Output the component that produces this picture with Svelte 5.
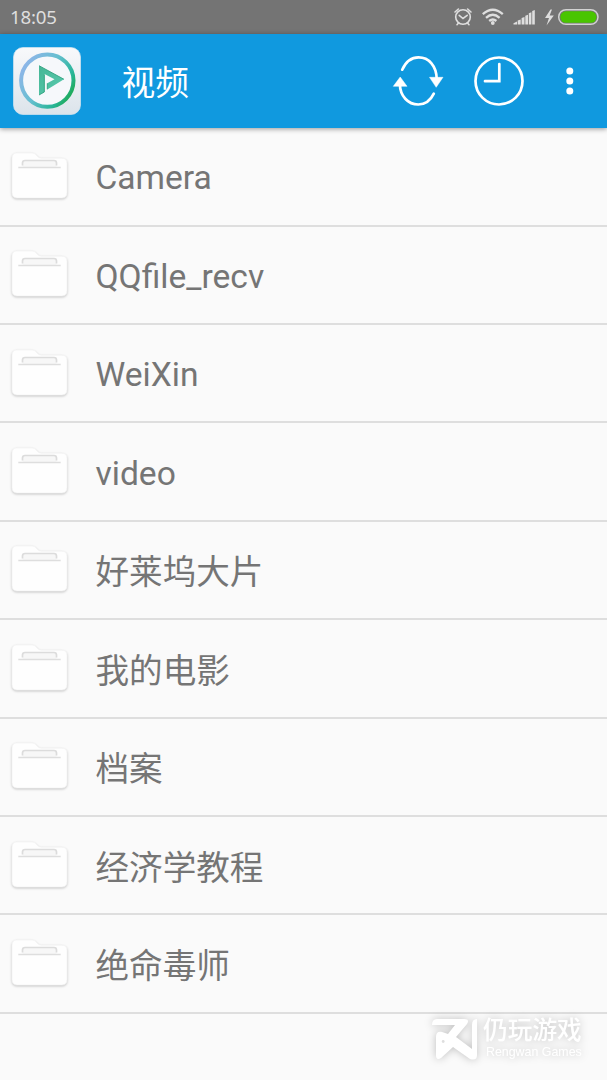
<script>
  const folders = ['Camera', 'QQfile_recv', 'WeiXin', 'video', '好莱坞大片', '我的电影', '档案', '经济学教程', '绝命毒师'];
</script>

<div class="screen">
  <div class="status">
    <span class="time">18:05</span>
    <svg class="indicators" viewBox="440 0 167 34" width="167" height="34">
      <g fill="none" stroke="#dedede" stroke-width="1.6" stroke-linecap="round">
        <circle cx="463" cy="17" r="7.3" />
        <path d="M459.2 15.3l3.8 3.2 4.2-3.2M455 12l3.400-3M471 12l-3.400-3M458.500 23l-1.500 1.700M467.500 23l1.500 1.700" />
        <g stroke-width="2.300" stroke-linecap="butt">
          <path d="M482.800 14.200q10-8.800 20 0M486 17.800q6.800-6 13.600 0M489.200 21q3.600-3 7.200 0" />
        </g>
      </g>
      <circle cx="492.800" cy="23" r="1.900" fill="#dedede" />
      <path d="M513.500 24.500v-1.200l3.500-1.800v3zM517.700 24.500v-4l3-1v5zM521.600 24.500V18l2.900-1v7.500zM525.300 24.500v-8.800l2.700-1v9.800zM528.800 24.500v-11.300l2.600-1v12.300zM532.200 24.500V11l2.600-1v14.500z" fill="#dedede" />
      <path d="M550.500 9.500L545 18h4l-2.500 7.500 7.300-10h-4.200l2.400-6z" fill="#dedede" />
      <rect x="558.700" y="9.700" width="39.300" height="14.600" rx="7.300" fill="#747474" stroke="#d2d2d2" stroke-width="1.500" />
      <rect x="560.300" y="11.300" width="36.200" height="11.500" rx="5.700" fill="#49c500" />
    </svg>
  </div>

  <header>
    <svg class="logo" viewBox="0 0 68 68" width="68" height="68">
      <defs>
        <linearGradient id="tile" x2="0" y2="1">
          <stop stop-color="#f8f9fb" /><stop offset="1" stop-color="#dce4eb" />
        </linearGradient>
        <linearGradient id="ring" x1="0" y1=".2" x2="1" y2=".8">
          <stop stop-color="#91b5eb" /><stop offset=".45" stop-color="#65bfcf" /><stop offset=".8" stop-color="#27b596" /><stop offset="1" stop-color="#1da849" />
        </linearGradient>
        <linearGradient id="play" x2="1" y2="1">
          <stop stop-color="#45b695" /><stop offset="1" stop-color="#5acbb0" />
        </linearGradient>
      </defs>
      <rect x=".5" y=".5" width="67" height="67" rx="9.500" fill="url(#tile)" stroke="#d7e5ef" stroke-width=".7" />
      <circle cx="34.300" cy="33.600" r="26.200" fill="#f6f8fb" stroke="url(#ring)" stroke-width="4" />
      <path d="M26 18.700L51 32.300 34.300 42.500V36.300L41.500 32.300 31.500 27V45L26 48z" fill="url(#play)" />
      <path d="M26 18.700L51 32.300M31.300 27.500V45L26 48M34.300 36.300V42.300" fill="none" stroke="#30a17e" stroke-width=".9" />
    </svg>
    <h1>视频</h1>
    <svg class="actions" viewBox="380 34 227 94" width="227" height="94">
      <g fill="none" stroke="#fff" stroke-width="2.700" stroke-linecap="round">
        <path d="M402.200 69.700C406 61.500 412 57.400 418.500 57.400C429 57.400 436.500 66 436.700 79" />
        <path d="M399.900 84C400 96 408 104.500 418.300 104.500C425 104.500 430.500 100.500 433.800 93.700" />
        <circle cx="499" cy="81" r="23.500" />
        <path d="M499.300 64v17.200H485" />
      </g>
      <path d="M429.500 77.300h13.500L436.200 87.300zM393.300 86.300h13.700L400.200 77z" fill="#fff" stroke="#fff" stroke-width=".5" />
      <g fill="#fff"><circle cx="569.800" cy="70.900" r="3.500" /><circle cx="569.800" cy="81" r="3.500" /><circle cx="569.800" cy="91.100" r="3.500" /></g>
    </svg>
  </header>

  <ul>
    {#each folders as name}
      <li>
        <svg class="folder" viewBox="0 0 62 54" width="62" height="54">
          <path d="M3 8.500q0-5.500 5-5.500h15q3 0 5 3 1.500 2.300 5 2.300h20q5 0 5 5v29q0 5.700-5 5.700H8q-5 0-5-5.700z" fill="#fefefe" stroke="#f3f3f3" stroke-width=".7" />
          <path d="M13.500 17v-4q0-2.500 2.500-2.500h29q2.500 0 2.500 2.500v4z" fill="#f7f7f7" />
          <path d="M13.500 15.500v-2.500q0-2.500 2.500-2.500h29q2.500 0 2.500 2.500v2.500" fill="none" stroke="#dcdcdc" stroke-width="1.700" />
          <path d="M9.300 17.500h42.400" stroke="#dedede" stroke-width="1.500" />
        </svg>
        <span class:cjk={name.charCodeAt(0) > 255}>{name}</span>
      </li>
    {/each}
  </ul>

  <div class="watermark">
    <svg viewBox="0 0 48 44" width="48" height="44">
      <path d="M1 8q0-6 5-6h27q6 0 3 5L25 20l16 12V8q0-6 5-6v36q0 6-7 4L22 30 10 41q-5 3-5-3V20q0-6 6-5l6 2 7-9z" fill="#fff" />
      <circle cx="12.200" cy="24.500" r="1.400" fill="#dedede" />
    </svg>
    <div class="brand"><b>仍玩游戏</b><small>Rengwan Games</small></div>
  </div>
</div>

<style>
  :global(body) { margin: 0; }
  .screen { position: relative; width: 607px; height: 1080px; overflow: hidden; background: #fafafa; font-family: Roboto, "Noto Sans CJK SC", sans-serif; }
  .status { height: 34px; display: flex; justify-content: space-between; align-items: center; background: #747474; }
  .time { font: 18.700px/20px "Noto Sans", sans-serif; padding-left: 10px; letter-spacing: -.2px; color: #dedede; }
  svg { display: block; flex: none; }
  header { position: relative; height: 94px; display: flex; align-items: center; background: #1099df; box-shadow: 0 1px 5px rgba(0, 0, 0, .4); }
  .logo { margin-left: 13px; }
  h1 { margin: 0 0 0 40.500px; padding-top: 5px; font-size: 33.700px; line-height: 46px; font-weight: 400; color: #fff; }
  .actions { margin-left: auto; }
  ul { list-style: none; margin: 0; padding: .2px 0 0; }
  li { box-sizing: border-box; height: 98.400px; display: flex; align-items: center; border-bottom: 2px solid #dedede; padding: 0 0 0 9px; }
  .folder { filter: drop-shadow(0 1px 1px rgba(0, 0, 0, .22)); margin-top: 1px; }
  li span { margin-left: 24.500px; padding-top: 4px; font-size: 33.600px; line-height: 48px; color: #757575; }
  li .cjk { padding-top: 7px; }
  .watermark { position: absolute; left: 431px; top: 1017px; display: flex; color: #fff; filter: drop-shadow(0 0 4px rgba(0, 0, 0, .24)); }
  .brand { display: flex; flex-direction: column; margin-left: 4px; }
  b { padding-top: 1px; font-size: 24.700px; line-height: 26px; font-weight: 500; }
  small { margin-left: 3px; font: 12.400px/16px "Liberation Sans", sans-serif; white-space: nowrap; }
</style>
